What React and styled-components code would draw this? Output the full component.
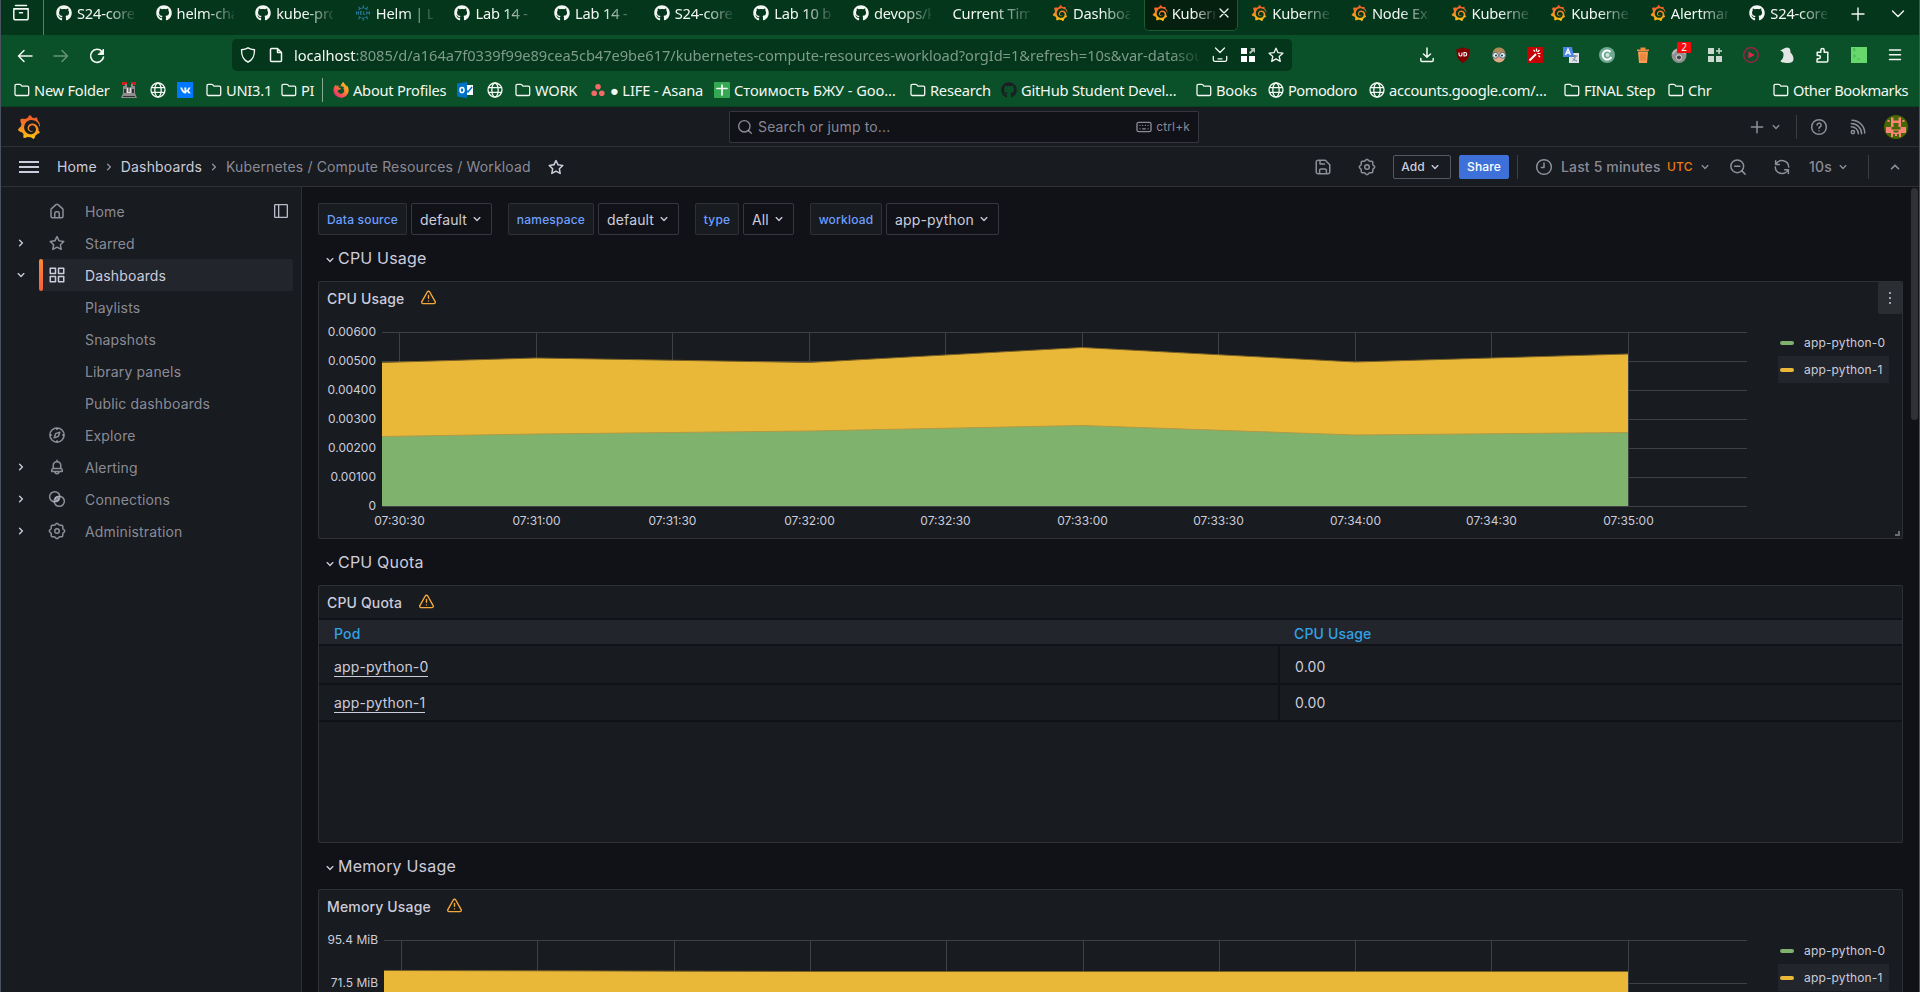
import React from 'react';
import styled, { createGlobalStyle, css } from 'styled-components';
import { FaGithub, FaFirefoxBrowser, FaVk } from 'react-icons/fa';
import { SiGrafana, SiHelm } from 'react-icons/si';

const c = {
  text: '#ccccdc',
  muted: 'rgba(204, 204, 220, 0.65)',
  panel: '#181b1f',
  canvas: '#111217',
  hover: '#22252b',
  border: 'rgba(204, 204, 220, 0.12)',
  green: '#7eb26d',
  yellow: '#eab839',
};

const Global = createGlobalStyle`
  * { box-sizing: border-box; }
  body { margin: 0; background: ${c.canvas}; overflow: hidden; }
  svg { display: block; flex: none; }
`;

/* ---------- icons ---------- */

const P = {
  down: 'M17,9.17a1,1,0,0,0-1.41,0L12,12.71,8.46,9.17a1,1,0,0,0-1.41,0,1,1,0,0,0,0,1.42l4.24,4.24a1,1,0,0,0,1.42,0L17,10.59A1,1,0,0,0,17,9.17Z',
  right: 'M14.83,11.29,10.59,7.05a1,1,0,0,0-1.42,0,1,1,0,0,0,0,1.41L12.71,12,9.17,15.54a1,1,0,0,0,0,1.41,1,1,0,0,0,.71.29,1,1,0,0,0,.71-.29l4.24-4.24A1,1,0,0,0,14.83,11.29Z',
  up: 'M17,13.41,12.71,9.17a1,1,0,0,0-1.42,0L7.05,13.41a1,1,0,0,0,0,1.42,1,1,0,0,0,1.41,0L12,11.29l3.54,3.54a1,1,0,0,0,.7.29,1,1,0,0,0,.71-.29A1,1,0,0,0,17,13.41Z',
  apps: 'M10,13H3a1,1,0,0,0-1,1v7a1,1,0,0,0,1,1h7a1,1,0,0,0,1-1V14A1,1,0,0,0,10,13ZM9,20H4V15H9ZM21,2H14a1,1,0,0,0-1,1v7a1,1,0,0,0,1,1h7a1,1,0,0,0,1-1V3A1,1,0,0,0,21,2ZM20,9H15V4h5Zm1,4H14a1,1,0,0,0-1,1v7a1,1,0,0,0,1,1h7a1,1,0,0,0,1-1V14A1,1,0,0,0,21,13Zm-1,7H15V15h5ZM10,2H3A1,1,0,0,0,2,3v7a1,1,0,0,0,1,1h7a1,1,0,0,0,1-1V3A1,1,0,0,0,10,2ZM9,9H4V4H9Z',
  home: 'M20,8h0L14,2.74a3,3,0,0,0-4,0L4,8a3,3,0,0,0-1,2.26V19a3,3,0,0,0,3,3H18a3,3,0,0,0,3-3V10.25A3,3,0,0,0,20,8ZM14,20H10V15a1,1,0,0,1,1-1h2a1,1,0,0,1,1,1Zm5-1a1,1,0,0,1-1,1H16V15a3,3,0,0,0-3-3H11a3,3,0,0,0-3,3v5H6a1,1,0,0,1-1-1V10.25a1,1,0,0,1,.34-.75l6-5.25a1,1,0,0,1,1.32,0l6,5.25a1,1,0,0,1,.34.75Z',
  star: 'M22,9.67A1,1,0,0,0,21.14,9l-5.69-.83L12.9,3a1,1,0,0,0-1.8,0L8.55,8.16,2.86,9a1,1,0,0,0-.81.68,1,1,0,0,0,.25,1l4.13,4-1,5.68A1,1,0,0,0,6.9,21.44L12,18.77l5.1,2.67a.93.93,0,0,0,.46.12,1,1,0,0,0,.59-.19,1,1,0,0,0,.4-1l-1-5.68,4.13-4A1,1,0,0,0,22,9.67Zm-6.15,4a1,1,0,0,0-.29.88l.72,4.2-3.76-2a1.06,1.06,0,0,0-.94,0l-3.76,2,.72-4.2a1,1,0,0,0-.29-.88l-3-3,4.21-.61a1,1,0,0,0,.76-.55L12,5.7l1.88,3.82a1,1,0,0,0,.76.55l4.21.61Z',
  bell: 'M18,13.18V10a6,6,0,0,0-5-5.91V3a1,1,0,0,0-2,0V4.09A6,6,0,0,0,6,10v3.18A3,3,0,0,0,4,16v2a1,1,0,0,0,1,1H8.14a4,4,0,0,0,7.72,0H19a1,1,0,0,0,1-1V16A3,3,0,0,0,18,13.18ZM8,10a4,4,0,0,1,8,0v3H8Zm4,10a2,2,0,0,1-1.72-1h3.44A2,2,0,0,1,12,20Zm6-3H6V16a1,1,0,0,1,1-1H17a1,1,0,0,1,1,1Z',
};

const Solid = ({ d, size = 16 }) => (
  <svg width={size} height={size} viewBox="0 0 24 24" fill="currentColor"><path d={d} /></svg>
);
const Line = ({ size = 16, w = 2, box = 24, children }) => (
  <svg width={size} height={size} viewBox={`0 0 ${box} ${box}`} fill="none" stroke="currentColor" strokeWidth={w} strokeLinecap="round" strokeLinejoin="round">{children}</svg>
);

const cogPath = Array.from({ length: 96 }, (_, i) => {
  const a = (i / 96) * Math.PI * 2;
  const r = 9.3 + 0.85 * Math.cos(8 * a);
  return `${i ? 'L' : 'M'}${(12 + r * Math.cos(a)).toFixed(2)} ${(12 + r * Math.sin(a)).toFixed(2)}`;
}).join('') + 'Z';

const Cog = () => <Line size={18}><path d={cogPath} /><circle cx="12" cy="12" r="3" /></Line>;
const Compass = () => <Line size={18}><circle cx="12" cy="12" r="9.5" /><path d="M15.8 8.2l-2 5.6-5.6 2 2-5.6z" /><path d="M12 3.5v1M12 19.5v1M3.5 12h1M19.5 12h1" /></Line>;
const Rings = () => <Line size={18}><circle cx="9" cy="9" r="6.8" /><circle cx="15" cy="15" r="6.8" /><path d="M9.500 12a3.200 3.200 0 0 1 4.500-2.500M14.500 12a3.200 3.200 0 0 1-4.500 2.500M10.500 13.500l3-3" /></Line>;
const Dock = () => <Line size={16} w={2}><rect x="2.5" y="2.5" width="19" height="19" rx="1" /><path d="M8.5 3v18" /></Line>;
const Search = () => <Line><circle cx="11" cy="11" r="8.5" /><path d="M21.5 21.5l-4-4" /></Line>;
const Keyboard = () => <Line><rect x="1.5" y="5" width="21" height="14" rx="2.5" /><path d="M6 9.5h.1M10 9.5h.1M14 9.5h.1M18 9.5h.1M6 14.8h.1M10 14.8h4M18 14.8h.1" /></Line>;
const Help = () => <Line size={18}><circle cx="12" cy="12" r="9.8" /><path d="M9.4 9.4a2.7 2.7 0 1 1 3.8 2.6c-.8.4-1.2.8-1.2 1.6M12 17h.01" /></Line>;
const Rss = () => <Line size={18}><circle cx="5.2" cy="18.8" r="2.2" /><path d="M3 11.500a9.500 9.500 0 0 1 9.500 9.500M3 7.200A13.800 13.800 0 0 1 16.800 21M4 3a17.500 17.500 0 0 1 17 17" /></Line>;
const Plus = () => <Line size={18}><path d="M12 4.5v15M4.5 12h15" /></Line>;
const Save = () => <Line size={18}><path d="M3 5.5A2.5 2.5 0 0 1 5.500 3H15l6 6v9.500a2.500 2.500 0 0 1-2.500 2.500h-13A2.500 2.500 0 0 1 3 18.500zM8 3v5h6M7.500 21v-5a1.500 1.500 0 0 1 1.500-1.500h6a1.500 1.500 0 0 1 1.500 1.500v5" /></Line>;
const Clock = () => <Line size={18}><circle cx="12" cy="12" r="9.8" /><path d="M12 6.500V12.500H8.500" /></Line>;
const ZoomOut = () => <Line size={18}><circle cx="11" cy="11" r="8.500" /><path d="M21.500 21.500l-4-4M7.500 11h7" /></Line>;
const Sync = () => <Line size={18}><path d="M3.500 3.500v5h5M4 8.300A9 9 0 0 1 21 12M20.500 20.500v-5h-5M20 15.700A9 9 0 0 1 3 12" /></Line>;
const Warn = () => <Line size={17}><path d="M12 3.200c.7 0 1.300.4 1.700 1l7.700 13.600c.7 1.300-.2 2.900-1.700 2.900H4.300c-1.500 0-2.400-1.600-1.700-2.900L10.300 4.200c.4-.6 1-1 1.700-1z" /><path d="M12 9v4.200M12 16.800h.01" /></Line>;

const Folder = () => <Line size={16} w={1.3} box={16}><path d="M1 3.700c0-.8.500-1.300 1.300-1.300h3.500c.5 0 .8.2 1.100.5l1 1.200h5.500c.8 0 1.300.5 1.300 1.300v6.800c0 .8-.5 1.300-1.300 1.300H2.300c-.8 0-1.300-.5-1.300-1.300z" /></Line>;
const Globe = () => <Line size={16} w={1.3} box={16}><circle cx="8" cy="8" r="7" /><ellipse cx="8" cy="8" rx="3.200" ry="7" /><path d="M1.500 5.700h13M1.500 10.300h13" /></Line>;

/* ---------- browser chrome ---------- */

const Window = styled.div`
  width: 1920px; height: 992px; overflow: hidden;
  display: flex; flex-direction: column;
  border: solid #4a5261; border-width: 0 1px;
  background: ${c.canvas};
`;
const Chrome = styled.header`
  flex: none; display: flex; flex-direction: column;
  font-family: "Noto Sans", sans-serif; font-size: 14.67px; color: #f4f7f4;
`;
const TabStrip = styled.div`height: 35px; background: #03361a; display: flex;`;
const ListTabs = styled.div`
  width: 43px; padding: 4px 0 0 11px; border-right: 1px solid #5a7d67;
`;
const Tabs = styled.div`display: flex; width: 1794px; padding-left: 4px;`;
const Tab = styled.div`
  flex: none; width: 94px; height: 31px; margin-right: 5.62px; padding: 0 8px;
  display: flex; align-items: center; gap: 5px; padding-bottom: 5px;
  ${p => p.$active && css`background: #06200f; border: 1px solid #1b5a33; border-top: 0; border-radius: 0 0 5px 5px; padding-left: 7px; padding-bottom: 4px; gap: 4px;`}
`;
const TabTitle = styled.span`
  flex: 1; min-width: 0; overflow: hidden; white-space: nowrap; line-height: 24px; letter-spacing: -0.2px;
  mask-image: linear-gradient(90deg, #000 50%, rgba(0, 0, 0, 0.12) 100%);
`;
const StripButton = styled.div`width: 40px; height: 27px; display: grid; place-items: center;`;

const Logo = styled.span`
  flex: none; display: flex;
  svg { width: ${p => p.$size || 16}px; height: ${p => p.$size || 16}px; }
  color: ${p => p.$color || 'inherit'};
  ${p => p.$grafana && css`svg { fill: url(#grafanaFill); }`}
  ${p => p.$firefox && css`svg { fill: url(#firefoxFill); }`}
`;

const tabs = [
  ['gh', 'S24-core-course'], ['gh', 'helm-charts'], ['gh', 'kube-prometheus'], ['helm', 'Helm | List'],
  ['gh', 'Lab 14 - Dev'], ['gh', 'Lab 14 - Dev'], ['gh', 'S24-core-course'], ['gh', 'Lab 10 bonus'],
  ['gh', 'devops/k8s'], [null, 'Current Time'], ['gr', 'Dashboards'], ['gr', 'Kubernetes', true],
  ['gr', 'Kubernetes'], ['gr', 'Node Exporter'], ['gr', 'Kubernetes'], ['gr', 'Kubernetes'],
  ['gr', 'Alertmanager'], ['gh', 'S24-core-course'],
];
const Favicon = ({ kind }) => {
  if (kind === 'gh') return <Logo><FaGithub /></Logo>;
  if (kind === 'gr') return <Logo $grafana><SiGrafana /></Logo>;
  if (kind === 'helm') return <Logo $color="#277a9f"><SiHelm /></Logo>;
  return null;
};

const NavBar = styled.div`height: 40px; background: #0a5028; display: flex; align-items: center;`;
const NavButtons = styled.div`width: 231px; padding-left: 16px; padding-top: 1px; display: flex; gap: 20px;`;
const Dim = styled.span`opacity: ${p => p.$o || 1}; display: flex;`;
const UrlBar = styled.div`
  width: 1060px; height: 32px; background: #03361a; border-radius: 5px;
  display: flex; align-items: center; padding: 0 8px; gap: 12px;
`;
const Url = styled.div`
  width: 912px; margin-left: -2px; margin-right: 1px; overflow: hidden; white-space: nowrap; color: #7f9a89; letter-spacing: -0.045px;
  mask-image: linear-gradient(90deg, #000 97%, rgba(0, 0, 0, 0.15) 100%);
  b { font-weight: 400; color: #f4f7f4; }
`;
const UrlActions = styled.div`display: flex; gap: 12px; align-items: center;`;
const Extensions = styled.div`
  margin-left: auto; width: 504px; display: grid; grid-template-columns: repeat(14, 36px); justify-items: center; align-items: center;
  margin-right: 6px;
`;
const ExtSlot = styled.div`position: relative; display: flex;`;
const Badge = styled.span`
  position: absolute; left: 6px; top: -5px; width: 14px; height: 11px; background: #f50b0b; border-radius: 1px;
  font-size: 10px; line-height: 11px; text-align: center;
`;

const BookmarkBar = styled.div`
  height: 32px; background: #0a5028; border-bottom: 1px solid #074420;
  display: flex; align-items: center; padding-left: 13px; padding-bottom: 1px; white-space: nowrap;
`;
const Bookmark = styled.div`
  flex: none; display: flex; align-items: center; gap: 4px; width: ${p => p.$w}px; letter-spacing: ${p => p.$ls ?? -0.25}px;
`;
const BarSeparator = styled.div`width: 1px; height: 24px; background: #86a893; margin-right: 10px;`;
const Square = styled.span`
  width: 16px; height: 16px; background: ${p => p.$bg}; display: grid; place-items: center; border-radius: ${p => p.$r || 0}px;
`;

const ListIcon = () => <Line size={18} w={1.5} box={18}><path d="M3.500 1.500h11M1.800 4.700h14.400" /><rect x="1.800" y="4.700" width="14.400" height="11" rx="1.800" /><path d="M7.500 8.800h3" /></Line>;
const Robot = () => (
  <svg width="16" height="16" viewBox="0 0 16 16"><path d="M1 0h5v3H1zM10 0h5v3h-5z" fill="#d31d1d" /><path d="M2 4h2V2h2v3h4V2h2v2h2v7l2 5H0l2-5z" fill="#8d8d8d" /><path d="M3 7h2v4H3zM11 7h2v4h-2zM2 14h12v1H2z" fill="#333" /><path d="M6 6h4v5H6z" fill="#ddd" /><path d="M7.500 4h1v6h-1z" fill="#333" /></svg>
);
const Outlook = () => (
  <svg width="16" height="16" viewBox="0 0 16 16"><rect x="8" y="3" width="8" height="10" fill="#fff" /><path d="M9 8l2 2 4-5" stroke="#0072c6" strokeWidth="1.500" fill="none" /><path d="M0 1.500L10 0v16L0 14.500z" fill="#0072c6" /><ellipse cx="5" cy="8" rx="2" ry="2.600" fill="none" stroke="#fff" strokeWidth="1.500" /></svg>
);
const Asana = () => (
  <svg width="16" height="16" viewBox="0 0 16 16" fill="#f06a6a"><circle cx="8" cy="4.800" r="2.800" /><circle cx="4.200" cy="11.300" r="2.800" /><circle cx="11.800" cy="11.300" r="2.800" /></svg>
);
const Sheets = () => <Line size={16} w={1.7} box={16}><path d="M3 6.500h10M8 3v10" /></Line>;

const bookmarks = [
  [107, <Folder />, 'New Folder'], [29, <Robot />], [27, <Globe />],
  [29, <Square $bg="#0077ff"><Logo $size={11}><FaVk /></Logo></Square>],
  [75, <Folder />, 'UNI3.1'], [41, <Folder />, 'PI'], 'sep',
  [124, <Logo $firefox><FaFirefoxBrowser /></Logo>, 'About Profiles'], [30, <Outlook />], [28, <Globe />],
  [75, <Folder />, 'WORK'], [124, <Asana />, '● LIFE - Asana', -0.15],
  [196, <Square $bg="#34a853" $r={1}><Sheets /></Square>, 'Стоимость БЖУ - Goo…', -0.07],
  [91, <Folder />, 'Research'], [195, <Logo $color="#1b1f23"><FaGithub /></Logo>, 'GitHub Student Devel…', -0.22],
  [72, <Folder />, 'Books'], [101, <Globe />, 'Pomodoro', -0.5], [195, <Globe />, 'accounts.google.com/…', -0.3],
  [104, <Folder />, 'FINAL Step', -0.4], [105, <Folder />, 'Chr'], [140, <Folder />, 'Other Bookmarks', -0.45],
];

const s16 = { width: 16, height: 16, viewBox: '0 0 16 16' };
const extensions = [
  <Line w={1.5} box={16}><path d="M8 1v9M4.500 7L8 10.300 11.500 7M1.800 11.500v1.700c0 .8.500 1.300 1.300 1.300h9.800c.8 0 1.300-.5 1.300-1.300v-1.700" /></Line>,
  <svg {...s16}><path d="M8 .3c2 1.300 4 1.700 6.500 1.700 0 6.500-.5 10.500-6.500 14C2 12.500 1.500 8.500 1.500 2 4 2 6 1.600 8 .3z" fill="#800000" /><path d="M4 5.500v2a1.500 1.500 0 0 0 3 0v-2M9 5.500v3.500h1a1.700 1.700 0 0 0 0-3.500z" stroke="#fff" strokeWidth="1.100" fill="none" /></svg>,
  <svg {...s16}><ellipse cx="8" cy="8.500" rx="6.500" ry="7" fill="#e0a888" /><path d="M1.500 7C2 2 5 .5 8 .5S14 2 14.500 7C11 5 5 5 1.500 7z" fill="#b08958" /><circle cx="4.500" cy="8.300" r="2.900" fill="#dff1f5" stroke="#567" /><circle cx="11.500" cy="8.300" r="2.900" fill="#dff1f5" stroke="#567" /><circle cx="5" cy="8.500" r="1" fill="#234" /><circle cx="11" cy="8.500" r="1" fill="#234" /></svg>,
  <svg {...s16}><rect width="16" height="16" fill="#c40404" /><path d="M2.500 13.500L9 7" stroke="#fff" strokeWidth="2" /><path d="M9.500 1.500v3M12.500 3l-2 2M13.500 6.500h-3M6.500 3l1.500 1.500M13 10l-1.500-1.500" stroke="#fff" strokeWidth="1.200" /></svg>,
  <svg {...s16}><rect x="6" y="6" width="10" height="10" fill="#dfe3e8" /><path d="M0 0h9l2 10H0z" fill="#4a86e8" /><path d="M2.500 8L5 2l2.500 6M3.400 6h3.200" stroke="#fff" strokeWidth="1.300" fill="none" /><path d="M9.500 9h5M12 8v2c0 2-1 3-2.500 4M10 11.500c1 1.500 2 2 4 2.500" stroke="#66788a" fill="none" /></svg>,
  <svg {...s16}><circle cx="8" cy="8" r="8" fill="#6fa893" /><path d="M11.500 5a4.500 4.500 0 1 0 .8 5" stroke="#fff" strokeWidth="2" fill="none" /><circle cx="8.500" cy="8" r="2" fill="#cfe6dc" /></svg>,
  <svg {...s16}><path d="M2 2.500h3.500V.5h5v2H14V4H2z" fill="#f08a3c" /><path d="M3 4.500h10L12 16H4z" fill="#fb9b54" /><path d="M6 6.500v7M8 6.500v7M10 6.500v7" stroke="#d9752c" /></svg>,
  <ExtSlot><svg {...s16}><ellipse cx="8" cy="8.500" rx="7.500" ry="7.500" fill="#8e9290" /><path d="M2 7c1-5 11-6 12 0" stroke="#c8cac9" fill="none" strokeWidth="1.500" /><circle cx="8" cy="10.500" r="2.600" fill="#444" stroke="#ddd" /></svg><Badge>2</Badge></ExtSlot>,
  <svg {...s16} fill="#cbd9d0"><path d="M1 1h6v6H1zM1 9h6v6H1zM9 9h6v6H9zM11.300 1h1.500v2.300H15v1.500h-2.200V7h-1.500V4.800H9V3.300h2.300z" /></svg>,
  <svg {...s16}><circle cx="8" cy="8" r="7.300" fill="none" stroke="#b01d4e" strokeWidth="1.300" /><path d="M5.500 4.500l6 3.500-6 3.500z" fill="#e0244f" /></svg>,
  <svg {...s16}><path d="M1 3.500C4 3 5 .5 8 .5c3.500 0 3.500 3 3.500 5 2.500 2 3 5 3 6.500 0 2.500-2 4-5.500 4-5 0-7.500-1-7.500-2C4 12 4.500 10 4.500 7.500 4.500 5.500 4 4.500 1 3.500z" fill="#e4e6e4" /></svg>,
  <Line w={1.5} box={16}><path d="M2 15h9.500c.8 0 1.300-.5 1.300-1.300V5.300H9.200V3.200a1.700 1.700 0 0 0-3.400 0v2.100H2.200v3.200h1.600a1.600 1.600 0 0 1 0 3.200H2.200z" /></Line>,
  <svg {...s16}><rect width="16" height="16" fill="#66d86c" /><path d="M2 1.500h2v2H2M2 8h2v2H2M6 12h3" stroke="#48b952" fill="none" /></svg>,
  <Line w={1.5} box={16}><path d="M2.500 3h11M2.500 7.700h11M2.500 12.400h11" /></Line>,
];

function BrowserChrome() {
  return (
    <Chrome>
      <TabStrip>
        <ListTabs><ListIcon /></ListTabs>
        <Tabs>
          {tabs.map(([kind, title, active], i) => (
            <Tab key={i} $active={active}>
              <Favicon kind={kind} />
              <TabTitle>{title}</TabTitle>
              {active && <Line size={10} w={1.3} box={10}><path d="M1 1l8 8M9 1l-8 8" /></Line>}
            </Tab>
          ))}
        </Tabs>
        <StripButton><Line size={16} w={1.4} box={16}><path d="M8 2v12M2 8h12" /></Line></StripButton>
        <StripButton><Line size={16} w={1.4} box={16}><path d="M2.500 5L8 10.500 13.500 5" /></Line></StripButton>
      </TabStrip>
      <NavBar>
        <NavButtons>
          <Line w={1.5} box={16}><path d="M15 8H1.500M7 2.500L1.500 8 7 13.500" /></Line>
          <Dim $o={0.4}><Line w={1.5} box={16}><path d="M1 8h13.500M9 2.500L14.500 8 9 13.500" /></Line></Dim>
          <Line w={1.6} box={16}><path d="M14.500 9A6.500 6.500 0 1 1 13 3.500" /><path d="M14.500 1.500v5h-5z" fill="currentColor" strokeWidth="1" /></Line>
        </NavButtons>
        <UrlBar>
          <Line w={1.4} box={16}><path d="M8 .8c2 1.300 4 1.700 6.500 1.900 0 5.800-1 9.800-6.500 12.500C2.500 12.500 1.500 8.500 1.500 2.700 4 2.500 6 2.100 8 .8z" /></Line>
          <Line w={1.5} box={16}><path d="M3.500 1.500H9.500L13.500 5.500v8c0 .6-.4 1-1 1h-9c-.6 0-1-.4-1-1v-11c0-.6.4-1 1-1zM9.500 1.500v4h4" /></Line>
          <Url><b>localhost</b>:8085/d/a164a7f0339f99e89cea5cb47e9be617/kubernetes-compute-resources-workload?orgId=1&amp;refresh=10s&amp;var-datasource=default</Url>
          <UrlActions>
            <Line w={1.3} box={16}><path d="M3.500 1L8 5.500 12.500 1M1.300 9.500v3.200c0 1 .6 1.600 1.600 1.600h10.200c1 0 1.600-.6 1.600-1.600V9.500M6 11.800h4" /></Line>
            <svg {...s16} fill="#fff"><path d="M1 1h6v6H1zM1 9h6v6H1zM9 9h6v6H9z" /><path d="M10 1h5v5l-1.800-1.800L10.500 7 9 5.500l2.700-2.700z" opacity=".7" /></svg>
            <Line w={1.3} box={16}><path d="M8 1.200l2 4.500 4.900.5-3.700 3.300 1.100 4.900L8 11.900l-4.300 2.500 1.100-4.900L1.100 6.200 6 5.700z" /></Line>
          </UrlActions>
        </UrlBar>
        <Extensions>{extensions.map((e, i) => <React.Fragment key={i}>{e}</React.Fragment>)}</Extensions>
      </NavBar>
      <BookmarkBar>
        {bookmarks.map((b, i) => b === 'sep'
          ? <BarSeparator key={i} />
          : <Bookmark key={i} $w={b[0]} $ls={b[3]}>{b[1]}{b[2] && <span>{b[2]}</span>}</Bookmark>)}
      </BookmarkBar>
    </Chrome>
  );
}

/* ---------- app header ---------- */

const Grafana = styled.div`
  flex: 1; min-height: 0; display: flex; flex-direction: column;
  font-family: Inter, sans-serif; font-size: 14px; letter-spacing: 0.01071em; color: ${c.text};
`;
const TopBar = styled.div`
  flex: none; height: 40px; background: ${c.panel}; border-bottom: 1px solid ${c.border};
  display: grid; grid-template-columns: 728px 470px 1fr; align-items: center; color: ${c.muted};
`;
const Brand = styled.div`padding-left: 16px;`;
const SearchBox = styled.div`
  height: 32px; background: ${c.canvas}; border: 1px solid rgba(204, 204, 220, 0.2); border-radius: 2px;
  display: flex; align-items: center; padding: 0 8px 0 7px; gap: 5px;
`;
const Shortcut = styled.span`
  margin-left: auto; display: flex; align-items: center; gap: 4px; font-size: 12px;
`;
const Group = styled.div`display: flex; align-items: center; justify-content: flex-end; padding-right: ${p => p.$pr}px;`;
const Item = styled.span`
  flex: none; display: flex; align-items: center; justify-content: flex-start; width: ${p => p.$w}px; color: ${p => p.$color || 'inherit'};
  font-size: ${p => p.$fs || 14}px; font-weight: ${p => p.$fw || 400}; white-space: nowrap;
  ${p => p.$icon && css`svg { margin-left: -1px; }`}
`;
const Divider = styled.span`width: 1px; height: 24px; background: rgba(204, 204, 220, 0.2); margin-right: ${p => p.$mr}px;`;

const ToolBar = styled.div`
  flex: none; height: 40px; background: ${c.panel}; border-bottom: 1px solid ${c.border};
  display: flex; justify-content: space-between; align-items: center; color: ${c.muted};
`;
const Crumbs = styled.div`display: flex; align-items: center; padding-left: 18px;`;
const Crumb = styled.span`color: ${p => (p.$strong ? c.text : 'inherit')};`;
const CrumbArrow = styled.span`width: 24px; display: flex; justify-content: center; color: ${c.muted};`;
const Burger = styled.span`
  width: 20px; height: 12px; margin-right: 18px; border-top: 2px solid ${c.text}; border-bottom: 2px solid ${c.text};
  display: flex; align-items: center;
  &::after { content: ''; width: 20px; height: 2px; background: ${c.text}; }
`;
const StarWrap = styled.span`margin-left: 16px; color: ${c.text};`;
const Button = styled.span`
  height: 24px; width: ${p => p.$w}px; display: flex; align-items: center; justify-content: center; gap: 2px;
  font-size: 12px; font-weight: 500; border-radius: 2px; margin-right: 8px;
  color: ${p => (p.$primary ? '#fff' : c.text)};
  background: ${p => (p.$primary ? '#3d71d9' : 'transparent')};
  border: 1px solid ${p => (p.$primary ? '#3d71d9' : 'rgba(204,204,220,0.35)')};
`;

const Avatar = () => (
  <svg width="24" height="24" viewBox="0 0 24 24">
    <clipPath id="avatarClip"><circle cx="12" cy="12" r="12" /></clipPath>
    <g clipPath="url(#avatarClip)">
      <rect width="24" height="24" fill="#446804" />
      <path d="M7 2.500h2.500v3h5v-3H17V12h-2.500V8h-5v4H7zM2 12h5.500v2.500h9V12H22v6h-5v4h-2v-3h-2v2h-2v-2H9v3H7v-4H2zM3.500 5h2v2h-2zM18.500 5h2v2h-2z" fill="#fa8577" />
      <path d="M9.500 15.500h5v2h-5z" fill="#446804" />
    </g>
  </svg>
);

/* ---------- sidebar ---------- */

const Body = styled.div`flex: 1; min-height: 0; display: flex;`;
const Sidebar = styled.nav`
  flex: none; width: 301px; background: ${c.panel}; border-right: 1px solid ${c.border};
  padding: 8px 8px 0 0; display: flex; flex-direction: column;
`;
const NavRow = styled.div`
  flex: none; height: 32px; display: flex; align-items: center; color: ${p => (p.$active ? c.text : c.muted)};
`;
const NavArrow = styled.span`width: 38px; padding-left: 12px; display: flex; align-items: center; color: ${c.text};`;
const NavLabel = styled.div`
  width: 254px; height: 32px; display: flex; align-items: center; padding-left: 9px; border-radius: 2px;
  ${p => p.$active && css`
    background: ${c.hover};
    padding-left: 0;
    &::before { content: ''; width: 4px; height: 32px; margin-right: 5px; border-radius: 2px; background: linear-gradient(#ff8833, #f55f3e); }
  `}
`;
const NavIcon = styled.span`width: 37px; display: flex;`;
const DockToggle = styled.span`margin-left: auto; margin-right: 4px; color: ${c.text}; opacity: .9;`;

const nav = [
  [<Solid d={P.home} size={18} />, 'Home', null], [<Solid d={P.star} size={18} />, 'Starred', P.right],
  [<Solid d={P.apps} size={18} />, 'Dashboards', P.down, true], [null, 'Playlists'], [null, 'Snapshots'],
  [null, 'Library panels'], [null, 'Public dashboards'], [<Compass />, 'Explore'],
  [<Solid d={P.bell} size={18} />, 'Alerting', P.right], [<Rings />, 'Connections', P.right], [<Cog />, 'Administration', P.right],
];

/* ---------- dashboard ---------- */

const Canvas = styled.main`
  flex: 1; min-width: 0; overflow: hidden; background: ${c.canvas};
  padding: 16px 0 0 16px; display: flex; flex-direction: column; gap: 7px;
`;
const Scroll = styled.div`flex: none; width: 16px; padding: 1px 1px 0 8px;`;
const Thumb = styled.div`width: 7px; height: 232px; border-radius: 4px; background: #303136;`;
const Variables = styled.div`flex: none; height: 32px; display: flex;`;
const VarLabel = styled.span`
  width: ${p => p.$w}px; margin-right: 4px; border: 1px solid ${c.border}; border-radius: 2px; background: ${c.panel};
  color: #6e9fff; font-size: 12px; font-weight: 500; letter-spacing: 0.016em; display: grid; place-items: center;
`;
const VarSelect = styled.span`
  width: ${p => p.$w}px; margin-right: 16px; border: 1px solid rgba(204, 204, 220, 0.2); border-radius: 2px;
  padding-left: 8px; display: flex; align-items: center; gap: 2px;
  svg { margin-top: -1px; }
`;
const RowTitle = styled.div`
  flex: none; height: 32px; padding-left: 4px; display: flex; align-items: center; font-size: 16px; letter-spacing: 0.012em;
  svg { margin-top: 3px; }
`;
const Panel = styled.section`
  flex: none; width: 1585px; height: 258px; background: ${c.panel}; border: 1px solid ${c.border}; border-radius: 2px;
  display: flex; flex-direction: column; position: relative;
`;
const PanelHead = styled.div`
  flex: none; height: 32px; padding-left: 8px; padding-top: 1px; display: flex; align-items: center; gap: 16px; font-weight: 500; letter-spacing: 0.01071em; line-height: 20px;
`;
const PanelBody = styled.div`flex: 1; display: flex;`;
const WarnIcon = styled.span`color: #f5a83a; margin: -2px 0 0 -0.5px;`;
const Menu = styled.span`
  position: absolute; right: 0; top: 0; width: 24px; height: 32px; background: #2a2d32; border-radius: 2px;
  display: flex; flex-direction: column; align-items: center; justify-content: center; gap: 3px;
  i { width: 2px; height: 2px; background: #a0a0ae; }
`;
const Resize = styled.span`
  position: absolute; right: 2px; bottom: 2px; width: 5px; height: 5px; border: solid #6b6b72; border-width: 0 2px 2px 0;
`;
const Legend = styled.div`padding-top: 15px; margin-left: 29px; width: 111px; font-size: 12px;`;
const LegendItem = styled.div`
  height: 27px; padding-left: 2px; display: flex; align-items: center; gap: 10px; background: ${p => (p.$on ? c.hover : 'transparent')};
  &::before { content: ''; width: 14px; height: 4px; border-radius: 2px; background: ${p => p.$color}; }
`;

const ChartText = styled.text`font: 12px Inter, sans-serif; fill: ${c.text}; letter-spacing: 0;`;

function AreaChart({ left, yLabels, ySpace, yTop, ticks, upper, lower, base, times }) {
  const right = 1428;
  const poly = (pts, b) => `${pts.map(p => p.join(',')).join(' ')} ${pts[pts.length - 1][0]},${b} ${left},${b}`;
  return (
    <svg width="1430" height="224" viewBox="0 0 1430 224">
      {yLabels.map((l, i) => (
        <g key={l}>
          <path d={`M${left} ${yTop + i * ySpace + 0.5}H${right}`} stroke="#3f4145" />
          <ChartText x={left - 6} y={yTop + i * ySpace + 4} textAnchor="end">{l}</ChartText>
        </g>
      ))}
      {ticks.map(t => <path key={t} d={`M${t} ${yTop}V${base}`} stroke="#3f4145" />)}
      <polygon points={poly(upper, base)} fill={c.yellow} />
      <polyline points={upper.map(p => p.join(',')).join(' ')} fill="none" stroke="#7a6124" strokeWidth="1" />
      <polygon points={poly(lower, base)} fill={c.green} />
      <polyline points={lower.map(p => p.join(',')).join(' ')} fill="none" stroke="#b09a45" strokeWidth="1" />
      {times && times.map((t, i) => <ChartText key={t} x={ticks[i]} y={yTop + 193} textAnchor="middle">{t}</ChartText>)}
    </svg>
  );
}

const cpuTicks = Array.from({ length: 10 }, (_, i) => 80.5 + Math.round(i * 136.5));
const memTicks = Array.from({ length: 10 }, (_, i) => 82.5 + Math.round(i * 136.3));
const times = ['07:30:30', '07:31:00', '07:31:30', '07:32:00', '07:32:30', '07:33:00', '07:33:30', '07:34:00', '07:34:30', '07:35:00'];

const Table = styled.div`
  flex: 1; display: grid; grid-template-columns: 961px 1fr; grid-template-rows: 26px 39px 37px; align-content: start;
  border-top: 2px solid ${c.canvas};
`;
const HeadCell = styled.div`
  background: ${c.hover}; border-bottom: 2px solid ${c.canvas}; color: #33a2e5; font-weight: 500;
  padding: 2px 0 0 ${p => p.$pl}px; display: flex; align-items: center;
`;
const Cell = styled.div`
  border-bottom: 2px solid ${c.canvas}; padding-left: 15px;
  display: flex; align-items: center; padding-top: ${p => (p.$first ? 4 : 0)}px;
  ${p => p.$split && css`border-right: 2px solid ${c.canvas};`}
`;
const PodLink = styled.span`border-bottom: 1px solid ${c.text}; line-height: 19px;`;

const PanelLegend = () => (
  <Legend>
    <LegendItem $color={c.green}>app-python-0</LegendItem>
    <LegendItem $color={c.yellow} $on>app-python-1</LegendItem>
  </Legend>
);
const Title = ({ children }) => <PanelHead>{children}<WarnIcon><Warn /></WarnIcon></PanelHead>;
const Row = ({ children }) => <RowTitle><Solid d={P.down} />{children}</RowTitle>;

export default function App() {
  return (
    <Window>
      <Global />
      <svg width="0" height="0">
        <linearGradient id="grafanaFill" x1="0" y1="1" x2="0" y2="0"><stop offset="0" stopColor="#fcc70d" /><stop offset=".4" stopColor="#f79421" /><stop offset="1" stopColor="#f0532b" /></linearGradient>
        <linearGradient id="firefoxFill" x1="1" y1="0" x2="0" y2="1"><stop offset="0" stopColor="#ffe226" /><stop offset=".5" stopColor="#ff7139" /><stop offset="1" stopColor="#e31587" /></linearGradient>
      </svg>
      <BrowserChrome />
      <Grafana>
        <TopBar>
          <Brand><Logo $grafana $size={24}><SiGrafana /></Logo></Brand>
          <SearchBox><Search />Search or jump to...<Shortcut><Keyboard />ctrl+k</Shortcut></SearchBox>
          <Group $pr={11}>
            <Item $w={19} $icon><Plus /></Item><Item $w={28}><Solid d={P.down} /></Item>
            <Divider $mr={14} />
            <Item $w={39} $icon><Help /></Item><Item $w={34} $icon><Rss /></Item><Avatar />
          </Group>
        </TopBar>
        <ToolBar>
          <Crumbs>
            <Burger />
            <Crumb $strong>Home</Crumb><CrumbArrow><Solid d={P.right} /></CrumbArrow>
            <Crumb $strong>Dashboards</Crumb><CrumbArrow><Solid d={P.right} /></CrumbArrow>
            <Crumb>Kubernetes / Compute Resources / Workload</Crumb>
            <StarWrap><Solid d={P.star} size={18} /></StarWrap>
          </Crumbs>
          <Group $pr={14}>
            <Item $w={44} $icon><Save /></Item><Item $w={34} $icon><Cog /></Item>
            <Button $w={58}>Add<Solid d={P.down} /></Button><Button $w={50} $primary>Share</Button>
            <Divider $mr={18} />
            <Item $w={25} $icon><Clock /></Item><Item $w={106} $fw={500}>Last 5 minutes</Item>
            <Item $w={30} $color="#ee7a12" $fs={12} $fw={500}>UTC</Item><Item $w={33}><Solid d={P.down} /></Item>
            <Item $w={44} $icon><ZoomOut /></Item><Item $w={35} $icon><Sync /></Item>
            <Item $w={26} $fw={500}>10s</Item><Item $w={33}><Solid d={P.down} /></Item>
            <Divider $mr={16} />
            <Solid d={P.up} size={20} />
          </Group>
        </ToolBar>
        <Body>
          <Sidebar>
            {nav.map(([icon, label, arrow, active], i) => (
              <NavRow key={label} $active={active}>
                <NavArrow>{arrow && <Solid d={arrow} />}</NavArrow>
                <NavLabel $active={active}>
                  <NavIcon>{icon}</NavIcon>{label}
                  {i === 0 && <DockToggle><Dock /></DockToggle>}
                </NavLabel>
              </NavRow>
            ))}
          </Sidebar>
          <Canvas>
            <Variables>
              <VarLabel $w={89}>Data source</VarLabel><VarSelect $w={81}>default<Solid d={P.down} /></VarSelect>
              <VarLabel $w={86}>namespace</VarLabel><VarSelect $w={81}>default<Solid d={P.down} /></VarSelect>
              <VarLabel $w={44}>type</VarLabel><VarSelect $w={51}>All<Solid d={P.down} /></VarSelect>
              <VarLabel $w={72}>workload</VarLabel><VarSelect $w={113}>app-python<Solid d={P.down} /></VarSelect>
            </Variables>
            <Row>CPU Usage</Row>
            <Panel>
              <Title>CPU Usage</Title>
              <Menu><i /><i /><i /></Menu>
              <PanelBody>
                <AreaChart
                  left={63} yTop={18} ySpace={29} base={192} ticks={cpuTicks} times={times}
                  yLabels={['0.00600', '0.00500', '0.00400', '0.00300', '0.00200', '0.00100', '0']}
                  upper={[[63, 48.5], [217, 44], [490, 48.5], [763, 33.5], [1036, 48], [1309, 40]]}
                  lower={[[63, 122.5], [217, 120], [490, 117], [763, 111.500], [1036, 121], [1309, 118.500]]}
                />
                <PanelLegend />
              </PanelBody>
              <Resize />
            </Panel>
            <Row>CPU Quota</Row>
            <Panel>
              <Title>CPU Quota</Title>
              <Table>
                <HeadCell $pl={15}>Pod</HeadCell><HeadCell $pl={14}>CPU Usage</HeadCell>
                <Cell $first $split><PodLink>app-python-0</PodLink></Cell><Cell $first>0.00</Cell>
                <Cell $split><PodLink>app-python-1</PodLink></Cell><Cell>0.00</Cell>
              </Table>
            </Panel>
            <Row>Memory Usage</Row>
            <Panel>
              <Title>Memory Usage</Title>
              <PanelBody>
                <AreaChart
                  left={65} yTop={18} ySpace={43} base={192} ticks={memTicks}
                  yLabels={['95.4 MiB', '71.5 MiB', '47.7 MiB', '23.8 MiB', '0 B']}
                  upper={[[65, 48.500], [217, 48.800], [490, 49.500], [1309, 49.500]]}
                  lower={[[65, 120], [1309, 121]]}
                />
                <PanelLegend />
              </PanelBody>
            </Panel>
          </Canvas>
          <Scroll><Thumb /></Scroll>
        </Body>
      </Grafana>
    </Window>
  );
}
